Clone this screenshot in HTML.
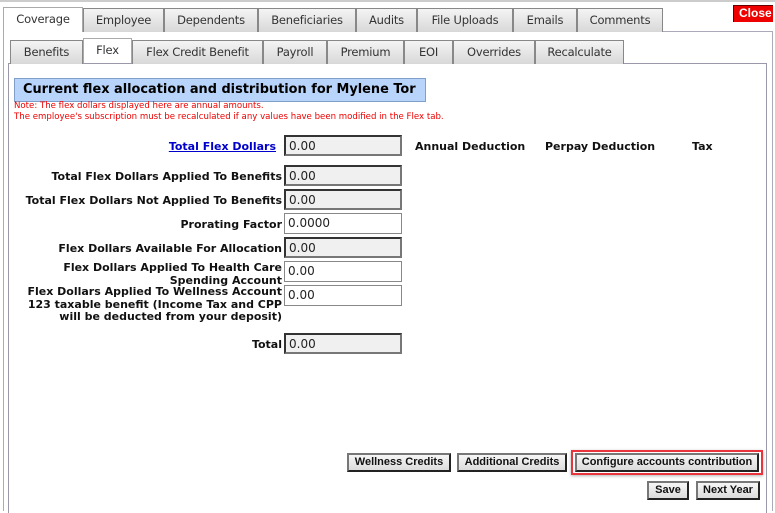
<!DOCTYPE html>
<html><head><style>
*{margin:0;padding:0;box-sizing:border-box}
body{width:775px;height:510px;background:#fff;font-family:"DejaVu Sans",Verdana,sans-serif;position:relative;overflow:hidden}
.a{position:absolute}
.tab{position:absolute;height:24px;border:1px solid #888;border-bottom:none;background:linear-gradient(#f4f4f4,#d8d8d8);font-size:11.5px;color:#333;text-align:center;line-height:22px;letter-spacing:-.2px;white-space:nowrap}
.tab.on{background:#fff;border-color:#aaa;height:25px}
.lbl{position:absolute;right:493px;font-size:11px;font-weight:bold;text-align:right;color:#111;line-height:12px;white-space:nowrap}
.in{position:absolute;left:284px;width:118px;height:21px;font-size:12px;color:#222;padding:2px 3px;line-height:15px}
.g{background:#f0f0f0;border:2px solid #333;border-right-color:#777;border-bottom-color:#777}
.w{background:#fff;border:1px solid #888}
.btn{position:absolute;height:19px;background:linear-gradient(#f6f6f6,#dcdcdc);border:2px solid #222;border-top-color:#777;border-left-color:#777;font-family:"Liberation Sans",Arial,sans-serif;font-weight:bold;font-size:11px;text-align:center;line-height:15px;color:#111;white-space:nowrap}
.h{position:absolute;top:140px;font-size:11px;font-weight:bold;color:#111}
</style></head><body>
<div class="a" style="left:0;top:0;width:775px;height:2px;background:#ccc"></div>
<div class="a" style="left:3px;top:31px;width:770px;height:480px;border:1px solid #aab;border-bottom:none"></div>
<div class="tab on" style="left:3px;top:7px;width:80px">Coverage</div>
<div class="tab" style="left:83px;top:8px;width:81px">Employee</div>
<div class="tab" style="left:164px;top:8px;width:94px">Dependents</div>
<div class="tab" style="left:258px;top:8px;width:98px">Beneficiaries</div>
<div class="tab" style="left:356px;top:8px;width:61px">Audits</div>
<div class="tab" style="left:417px;top:8px;width:96px">File Uploads</div>
<div class="tab" style="left:513px;top:8px;width:64px">Emails</div>
<div class="tab" style="left:577px;top:8px;width:86px">Comments</div>
<div class="a" style="left:733px;top:5px;width:40px;height:17px;background:#e00;border-left:1px solid #600;border-top:1px solid #600;color:#fff;font-family:'Liberation Sans',Arial,sans-serif;font-weight:bold;font-size:12px;line-height:15px;padding-left:5px;overflow:hidden;white-space:nowrap">Close</div>
<div class="a" style="left:8px;top:63px;width:759px;height:450px;border:1px solid #99a;border-bottom:none"></div>
<div class="tab" style="left:10px;top:40px;width:73px">Benefits</div>
<div class="tab on" style="left:83px;top:38px;width:49px">Flex</div>
<div class="tab" style="left:132px;top:40px;width:131px">Flex Credit Benefit</div>
<div class="tab" style="left:263px;top:40px;width:64px">Payroll</div>
<div class="tab" style="left:327px;top:40px;width:77px">Premium</div>
<div class="tab" style="left:404px;top:40px;width:49px">EOI</div>
<div class="tab" style="left:453px;top:40px;width:82px">Overrides</div>
<div class="tab" style="left:535px;top:40px;width:89px">Recalculate</div>
<div class="a" style="left:14px;top:78px;width:412px;height:24px;background:#b8d4fa;border:1px solid #7f9fc8;font-size:12.9px;font-weight:bold;line-height:22px;padding-left:8px;color:#000;white-space:nowrap;overflow:hidden">Current flex allocation and distribution for Mylene Tor</div>
<div class="a" style="left:14px;top:101px;font-size:8.6px;color:#e00;line-height:11px;white-space:nowrap">Note: The flex dollars displayed here are annual amounts.<br>The employee's subscription must be recalculated if any values have been modified in the Flex tab.</div>
<div class="lbl" style="top:141px;color:#00c;text-decoration:underline;right:499px">Total Flex Dollars</div>
<div class="in g" style="top:135px">0.00</div>
<div class="h" style="left:415px">Annual Deduction</div>
<div class="h" style="left:545px">Perpay Deduction</div>
<div class="h" style="left:692px">Tax</div>
<div class="lbl" style="top:171px">Total Flex Dollars Applied To Benefits</div>
<div class="in g" style="top:165px">0.00</div>
<div class="lbl" style="top:195px">Total Flex Dollars Not Applied To Benefits</div>
<div class="in g" style="top:189px">0.00</div>
<div class="lbl" style="top:219px">Prorating Factor</div>
<div class="in w" style="top:213px">0.0000</div>
<div class="lbl" style="top:243px">Flex Dollars Available For Allocation</div>
<div class="in g" style="top:237px">0.00</div>
<div class="lbl" style="top:262px;line-height:12.5px">Flex Dollars Applied To Health Care<br>Spending Account</div>
<div class="in w" style="top:261px">0.00</div>
<div class="lbl" style="top:286px;line-height:12.5px">Flex Dollars Applied To Wellness Account<br>123 taxable benefit (Income Tax and CPP<br>will be deducted from your deposit)</div>
<div class="in w" style="top:285px">0.00</div>
<div class="lbl" style="top:339px">Total</div>
<div class="in g" style="top:333px">0.00</div>
<div class="btn" style="left:347px;top:453px;width:104px">Wellness Credits</div>
<div class="btn" style="left:457px;top:453px;width:110px">Additional Credits</div>
<div class="a" style="left:571px;top:450px;width:192px;height:25px;border:2px solid #e8343c;box-shadow:0 1px 3px rgba(0,0,0,.3)"></div>
<div class="btn" style="left:575px;top:453px;width:184px">Configure accounts contribution</div>
<div class="btn" style="left:647px;top:481px;width:42px">Save</div>
<div class="btn" style="left:696px;top:481px;width:64px">Next Year</div>
</body></html>
